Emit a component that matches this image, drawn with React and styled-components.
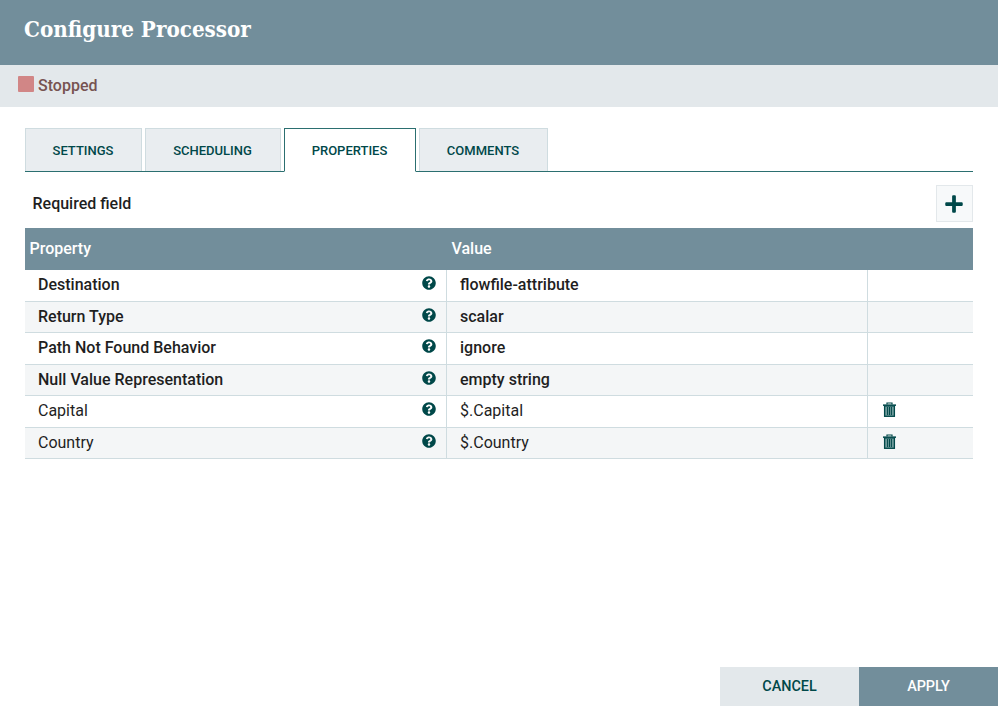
import React from 'react';
import styled, { createGlobalStyle } from 'styled-components';
import { FaQuestionCircle, FaPlus } from 'react-icons/fa';

const GlobalStyle = createGlobalStyle`
  html, body {
    margin: 0;
    padding: 0;
    background: #fff;
  }
  body {
    font-family: Roboto, "Liberation Sans", sans-serif;
  }
`;

const Dialog = styled.div`
  width: 998px;
  height: 706px;
  display: flex;
  flex-direction: column;
  overflow: hidden;
`;

const Header = styled.div`
  height: 65px;
  background: #728e9b;
  display: flex;
  align-items: center;
  padding-left: 24px;
  box-sizing: border-box;
`;

const Title = styled.div`
  font-family: "DejaVu Serif Condensed", "DejaVu Serif", "Liberation Serif", serif;
  font-size: 22.2px;
  font-weight: 700;
  color: #fff;
  margin-top: -7px;
`;

const StatusBar = styled.div`
  height: 42px;
  background: #e3e8eb;
  display: flex;
  align-items: center;
  padding-left: 18px;
  gap: 4px;
`;

const StatusIcon = styled.div`
  width: 16px;
  height: 16px;
  border-radius: 1px;
  background: #d18686;
  margin-top: -4px;
`;

const StatusText = styled.div`
  font-size: 16px;
  font-weight: 500;
  color: #775351;
  margin-top: -1px;
`;

const Body = styled.div`
  flex: 1;
  padding: 21px 25px 0 24.5px;
  display: flex;
  flex-direction: column;
`;

const Tabs = styled.div`
  display: flex;
  height: 44px;
  box-sizing: border-box;
  border-bottom: 1px solid #2b6f70;
  gap: 3px;
`;

const Tab = styled.div`
  width: ${(props) => props.width}px;
  box-sizing: border-box;
  display: flex;
  align-items: center;
  justify-content: center;
  font-size: 13px;
  font-weight: 500;
  color: #004849;
  background: ${(props) => (props.active ? '#fff' : '#e9edf0')};
  border: 1px solid ${(props) => (props.active ? '#2b6f70' : '#cfdce0')};
  border-bottom: ${(props) => (props.active ? '1px solid #fff' : '0')};
  height: ${(props) => (props.active ? '44px' : '43px')};
`;

const Toolbar = styled.div`
  height: 56px;
  display: flex;
  align-items: center;
  justify-content: space-between;
  padding: 13px 0 6px 8px;
  box-sizing: border-box;
`;

const RequiredLabel = styled.div`
  font-size: 16px;
  font-weight: 500;
  color: #1f1f1f;
`;

const AddButton = styled.div`
  width: 37px;
  height: 37px;
  box-sizing: border-box;
  border: 1px solid #e3e8eb;
  background: #f7f9fa;
  display: flex;
  align-items: center;
  justify-content: center;
  padding-right: 1px;
  color: #004849;
  font-size: 20px;
`;

const Grid = styled.div`
  display: grid;
  grid-template-columns: 422px 421px 105px;
`;

const HeaderCell = styled.div`
  height: 42px;
  background: #728e9b;
  color: #fff;
  font-size: 16px;
  font-weight: 500;
  display: flex;
  align-items: center;
  padding: 0 0 2px 5px;
  box-sizing: border-box;
`;

const Row = styled.div`
  display: contents;
`;

const Cell = styled.div`
  height: 31.5px;
  box-sizing: border-box;
  background: ${(props) => (props.odd ? '#f4f6f7' : '#fff')};
  border-bottom: 1px solid #cfdce0;
  border-right: ${(props) => (props.last ? '0' : '1px solid #cfdce0')};
  display: flex;
  align-items: center;
  justify-content: space-between;
  padding: 0 10px 1px 13.5px;
  font-size: 16px;
  font-weight: ${(props) => (props.bold ? 500 : 400)};
  color: #1f1f1f;
`;

const HelpIcon = styled(FaQuestionCircle)`
  color: #004849;
  font-size: 14px;
  margin-top: -3px;
`;

const TrashSvg = styled.svg`
  width: 13px;
  height: 15px;
  margin: -2px 0 0 1.5px;
`;

const TrashIcon = () => (
  <TrashSvg viewBox="0 0 13 15">
    <path d="M4 2.6V1h5v1.6" fill="none" stroke="#004849" strokeWidth="1.2" />
    <rect x="0" y="2.4" width="13" height="1.5" fill="#004849" />
    <rect x="1.6" y="3.9" width="9.8" height="10.4" fill="#6f9a9b" stroke="#004849" strokeWidth="1.3" />
    <path d="M4.6 5v8M6.5 5v8M8.4 5v8" fill="none" stroke="#004849" strokeWidth="1" />
  </TrashSvg>
);

const Footer = styled.div`
  display: flex;
  justify-content: flex-end;
`;

const FooterButton = styled.div`
  width: 139px;
  height: 39px;
  display: flex;
  align-items: center;
  justify-content: center;
  font-size: 14.4px;
  font-weight: 500;
  color: ${(props) => (props.primary ? '#fff' : '#004849')};
  background: ${(props) => (props.primary ? '#728e9b' : '#e3e8eb')};
`;

const tabs = [
  { name: 'SETTINGS', width: 117 },
  { name: 'SCHEDULING', width: 136 },
  { name: 'PROPERTIES', width: 132, active: true },
  { name: 'COMMENTS', width: 129 },
];

const properties = [
  { name: 'Destination', value: 'flowfile-attribute', required: true },
  { name: 'Return Type', value: 'scalar', required: true },
  { name: 'Path Not Found Behavior', value: 'ignore', required: true },
  { name: 'Null Value Representation', value: 'empty string', required: true },
  { name: 'Capital', value: '$.Capital' },
  { name: 'Country', value: '$.Country' },
];

export default function App() {
  return (
    <Dialog>
      <GlobalStyle />
      <Header>
        <Title>Configure Processor</Title>
      </Header>
      <StatusBar>
        <StatusIcon />
        <StatusText>Stopped</StatusText>
      </StatusBar>
      <Body>
        <Tabs>
          {tabs.map((tab) => (
            <Tab key={tab.name} width={tab.width} active={tab.active}>
              {tab.name}
            </Tab>
          ))}
        </Tabs>
        <Toolbar>
          <RequiredLabel>Required field</RequiredLabel>
          <AddButton>
            <FaPlus />
          </AddButton>
        </Toolbar>
        <Grid>
          <HeaderCell>Property</HeaderCell>
          <HeaderCell>Value</HeaderCell>
          <HeaderCell />
          {properties.map((item, index) => (
            <Row key={item.name}>
              <Cell odd={index % 2 === 1} bold={item.required}>
                {item.name}
                <HelpIcon />
              </Cell>
              <Cell odd={index % 2 === 1} bold={item.required}>
                {item.value}
              </Cell>
              <Cell odd={index % 2 === 1} last>
                {!item.required && <TrashIcon />}
              </Cell>
            </Row>
          ))}
        </Grid>
      </Body>
      <Footer>
        <FooterButton>CANCEL</FooterButton>
        <FooterButton primary>APPLY</FooterButton>
      </Footer>
    </Dialog>
  );
}
